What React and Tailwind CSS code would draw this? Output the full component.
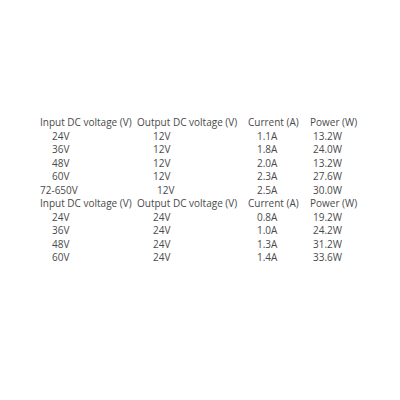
const rows = [
    { type: 'head' },
    { a: '24V', b: '12V', c: '1.1A', d: '13.2W' },
    { a: '36V', b: '12V', c: '1.8A', d: '24.0W' },
    { a: '48V', b: '12V', c: '2.0A', d: '13.2W' },
    { a: '60V', b: '12V', c: '2.3A', d: '27.6W' },
    { a: '72-650V', b: '12V', c: '2.5A', d: '30.0W', wide: true },
    { type: 'head' },
    { a: '24V', b: '24V', c: '0.8A', d: '19.2W' },
    { a: '36V', b: '24V', c: '1.0A', d: '24.2W' },
    { a: '48V', b: '24V', c: '1.3A', d: '31.2W' },
    { a: '60V', b: '24V', c: '1.4A', d: '33.6W' },
]

const App = () => {
    return (
        <main className="w-[400px] h-[400px] bg-white pt-[116px] pl-[40px] text-[10px] leading-[13.5px] text-[#4a4a4a]" style={{ fontFamily: '"Open Sans", "Noto Sans", sans-serif' }}>
            <div className="flex flex-col">
                { rows.map((row, key) => (
                    row.type === 'head' ?
                    <div key={key} className="flex whitespace-nowrap">
                        <div className="w-[97px]">Input DC voltage (V)</div>
                        <div className="w-[111px]">Output DC voltage (V)</div>
                        <div className="w-[62px]">Current (A)</div>
                        <div>Power (W)</div>
                    </div>
                    :
                    <div key={key} className="flex whitespace-nowrap">
                        <div className={row.wide ? "w-[97px]" : "w-[97px] pl-[12px]"}>{ row.a }</div>
                        <div className={row.wide ? "w-[111px] pl-[20px]" : "w-[111px] pl-[16px]"}>{ row.b }</div>
                        <div className="w-[62px] pl-[9px]">{ row.c }</div>
                        <div className="pl-[3px]">{ row.d }</div>
                    </div>
                )) }
            </div>
        </main>
    )
}

export default App;
